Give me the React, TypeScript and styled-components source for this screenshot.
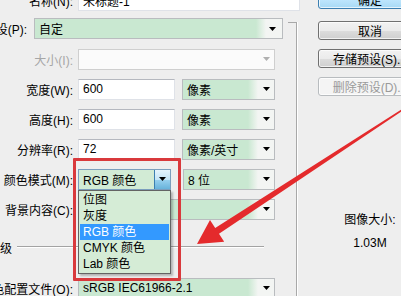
import React from "react";
import styled, { createGlobalStyle } from "styled-components";

const Global = createGlobalStyle`
  html, body { margin: 0; padding: 0; background: #eeeeee; overflow: hidden; }
  #root { width: 401px; height: 296px; overflow: hidden; }
  * { box-sizing: border-box; }
`;

const FONT = `"Liberation Sans", "Noto Sans CJK SC", sans-serif`;

const Screen = styled.div`
  position: relative;
  width: 401px;
  height: 296px;
  overflow: hidden;
  background: #eeeeee;
  font-family: ${FONT};
  font-size: 12px;
  color: #000;
`;

const Dialog = styled.div`
  display: flex;
  margin: -13px 0 0 -40px;
`;

const LeftCol = styled.div`
  width: 338px;
  flex-shrink: 0;
  display: flex;
  flex-direction: column;
`;

const Group = styled.div`
  position: relative;
  display: flex;
  flex-direction: column;
  &::after {
    content: "";
    position: absolute;
    top: 9px;
    right: 1px;
    bottom: 0;
    width: 8px;
    border-top: 1px solid #a8a8a8;
    border-right: 1px solid #a8a8a8;
    box-shadow: 1px 0 0 #ffffff;
  }
`;

const Row = styled.div<{ $h: number; $mt?: number }>`
  display: flex;
  align-items: center;
  height: ${(p) => p.$h}px;
  margin-top: ${(p) => p.$mt ?? 0}px;
  flex-shrink: 0;
`;

const Label = styled.div<{ $w: number; $gap?: number; $disabled?: boolean }>`
  width: ${(p) => p.$w}px;
  flex-shrink: 0;
  text-align: right;
  white-space: nowrap;
  margin-right: ${(p) => p.$gap ?? 5}px;
  color: ${(p) => (p.$disabled ? "#a6a6a6" : "#000")};
`;

const TextInput = styled.div<{ $w: number }>`
  width: ${(p) => p.$w}px;
  height: 21px;
  flex-shrink: 0;
  display: flex;
  align-items: center;
  padding-left: 4px;
  background: #ffffff;
  border: 1px solid #dfe2e8;
  border-top-color: #b5b8bf;
  white-space: nowrap;
`;

const Select = styled.div<{ $w: number; $ml?: number; $disabled?: boolean }>`
  position: relative;
  width: ${(p) => p.$w}px;
  height: 21px;
  margin-left: ${(p) => p.$ml ?? 0}px;
  flex-shrink: 0;
  display: flex;
  align-items: center;
  padding-left: 4px;
  white-space: nowrap;
  border: 1px solid ${(p) => (p.$disabled ? "#cfcfcf" : "#b9bcbf")};
  background: ${(p) =>
    p.$disabled
      ? "#fbfbfb"
      : "linear-gradient(to right, #c9e8d1 0, #c9e8d1 calc(100% - 26px), #f3f5f3 calc(100% - 16px))"};
  color: ${(p) => (p.$disabled ? "#a6a6a6" : "#000")};
`;

const ArrowBox = styled.span<{ $right: number; $disabled?: boolean }>`
  margin-left: auto;
  margin-right: ${(p) => p.$right}px;
  display: flex;
  align-items: center;
  color: ${(p) => (p.$disabled ? "#b0b0b0" : "#000")};
`;

const Arrow = ({ right, disabled }: { right: number; disabled?: boolean }) => (
  <ArrowBox $right={right} $disabled={disabled}>
    <svg width="7" height="4" viewBox="0 0 7 4">
      <polygon points="0,0 7,0 3.5,4" fill="currentColor" />
    </svg>
  </ArrowBox>
);

const ComboWrap = styled.div`
  position: relative;
  width: 93px;
  height: 21px;
  flex-shrink: 0;
`;

const Combo = styled.div`
  display: flex;
  align-items: stretch;
  width: 100%;
  height: 100%;
  border: 1px solid #7b9ebd;
  background: #d2ebd5;
`;

const ComboText = styled.div`
  flex: 1;
  display: flex;
  align-items: center;
  padding-left: 4px;
  white-space: nowrap;
`;

const DropBtn = styled.div`
  width: 16px;
  display: flex;
  align-items: center;
  justify-content: center;
  border-left: 1px solid #3c7fb1;
  background: linear-gradient(#e5f4fc 0%, #c4e5f6 50%, #98d1ef 51%, #68b3db 100%);
`;

const DropList = styled.div`
  position: absolute;
  top: 100%;
  left: 0;
  width: 93px;
  padding: 1px 1px;
  background: #d5ecd6;
  border: 1px solid #646464;
  box-shadow: 2px 2px 2px rgba(0, 0, 0, 0.25);
  z-index: 2;
`;

const Item = styled.div<{ $active?: boolean }>`
  height: 16px;
  line-height: 16px;
  padding-left: 3px;
  white-space: nowrap;
  background: ${(p) => (p.$active ? "#3399ff" : "transparent")};
  color: ${(p) => (p.$active ? "#ffffff" : "#000")};
`;

const SectionText = styled.div`
  padding-left: 28px;
  white-space: nowrap;
`;

const SectionLine = styled.div`
  width: 247px;
  margin-left: 5px;
  height: 2px;
  border-top: 1px solid #a3a3a3;
  border-bottom: 1px solid #ffffff;
`;

const RightCol = styled.div`
  width: 104px;
  margin-left: 20px;
  flex-shrink: 0;
  display: flex;
  flex-direction: column;
  align-items: center;
`;

const Button = styled.div<{ $mt: number; $variant?: "default" | "disabled" }>`
  width: 104px;
  height: 19px;
  margin-top: ${(p) => p.$mt}px;
  display: flex;
  align-items: center;
  justify-content: center;
  white-space: nowrap;
  border-radius: 3px;
  border: 1px solid
    ${(p) => (p.$variant === "default" ? "#3c7fb1" : p.$variant === "disabled" ? "#b8bcbf" : "#707070")};
  background: ${(p) =>
    p.$variant === "default"
      ? "linear-gradient(#eaf6fd 0%, #d9f0fc 50%, #bee6fd 51%, #a7d9f5 100%)"
      : p.$variant === "disabled"
      ? "#f4f4f4"
      : "linear-gradient(#f2f2f2 0%, #ebebeb 50%, #dddddd 51%, #cfcfcf 100%)"};
  box-shadow: inset 0 0 0 1px rgba(255, 255, 255, 0.7);
  color: ${(p) => (p.$variant === "disabled" ? "#9a9a9a" : "#000")};
`;

const InfoText = styled.div<{ $mt: number }>`
  margin-top: ${(p) => p.$mt}px;
  line-height: 16px;
  white-space: nowrap;
  text-align: center;
`;

const RedBox = styled.div`
  position: absolute;
  left: 73px;
  top: 158px;
  width: 108px;
  height: 123px;
  border: 3px solid #d9393c;
  border-radius: 1px;
  pointer-events: none;
  z-index: 3;
`;

const Overlay = styled.svg`
  position: absolute;
  left: 0;
  top: 0;
  pointer-events: none;
  z-index: 4;
`;

export default function App() {
  return (
    <>
      <Global />
      <Screen>
        <Dialog>
          <LeftCol>
            <Row $h={26}>
              <Label $w={113}>名称(N):</Label>
              <TextInput $w={222}>未标题-1</TextInput>
            </Row>
            <Group>
              <Row $h={31}>
                <Label $w={67} $gap={7}>预设(P):</Label>
                <Select $w={249}>
                  自定
                  <Arrow right={6} />
                </Select>
              </Row>
              <Row $h={30}>
                <Label $w={113} $disabled>大小(I):</Label>
                <Select $w={197} $disabled>
                  <Arrow right={4} disabled />
                </Select>
              </Row>
              <Row $h={30}>
                <Label $w={113}>宽度(W):</Label>
                <TextInput $w={97}>600</TextInput>
                <Select $w={93} $ml={7}>
                  像素
                  <Arrow right={4} />
                </Select>
              </Row>
              <Row $h={30}>
                <Label $w={113}>高度(H):</Label>
                <TextInput $w={97}>600</TextInput>
                <Select $w={93} $ml={7}>
                  像素
                  <Arrow right={4} />
                </Select>
              </Row>
              <Row $h={30}>
                <Label $w={113}>分辨率(R):</Label>
                <TextInput $w={97}>72</TextInput>
                <Select $w={93} $ml={7}>
                  像素/英寸
                  <Arrow right={4} />
                </Select>
              </Row>
              <Row $h={30}>
                <Label $w={113}>颜色模式(M):</Label>
                <ComboWrap>
                  <Combo>
                    <ComboText>RGB 颜色</ComboText>
                    <DropBtn>
                      <svg width="7" height="4" viewBox="0 0 7 4">
                        <polygon points="0,0 7,0 3.5,4" fill="#000" />
                      </svg>
                    </DropBtn>
                  </Combo>
                  <DropList>
                    <Item>位图</Item>
                    <Item>灰度</Item>
                    <Item $active>RGB 颜色</Item>
                    <Item>CMYK 颜色</Item>
                    <Item>Lab 颜色</Item>
                  </DropList>
                </ComboWrap>
                <Select $w={92} $ml={12}>
                  8 位
                  <Arrow right={4} />
                </Select>
              </Row>
              <Row $h={30}>
                <Label $w={113}>背景内容(C):</Label>
                <Select $w={197}>
                  <Arrow right={4} />
                </Select>
              </Row>
              <Row $h={18} $mt={14}>
                <SectionText>高级</SectionText>
                <SectionLine />
              </Row>
              <Row $h={30} $mt={17}>
                <Label $w={113}>颜色配置文件(O):</Label>
                <Select $w={197}>
                  sRGB IEC61966-2.1
                  <Arrow right={4} />
                </Select>
              </Row>
            </Group>
          </LeftCol>
          <RightCol>
            <Button $mt={3} $variant="default">确定</Button>
            <Button $mt={12}>取消</Button>
            <Button $mt={9}>存储预设(S)...</Button>
            <Button $mt={9} $variant="disabled">删除预设(D)...</Button>
            <InfoText $mt={116}>图像大小:</InfoText>
            <InfoText $mt={7}>1.03M</InfoText>
          </RightCol>
        </Dialog>
        <RedBox />
        <Overlay width="401" height="296" viewBox="0 0 401 296">
          <polygon
            points="401.6,109.4 215.2,228 210,220 197,244 224.2,241.8 219,233.8 402.4,110.8"
            fill="#e42a2c"
          />
        </Overlay>
      </Screen>
    </>
  );
}
